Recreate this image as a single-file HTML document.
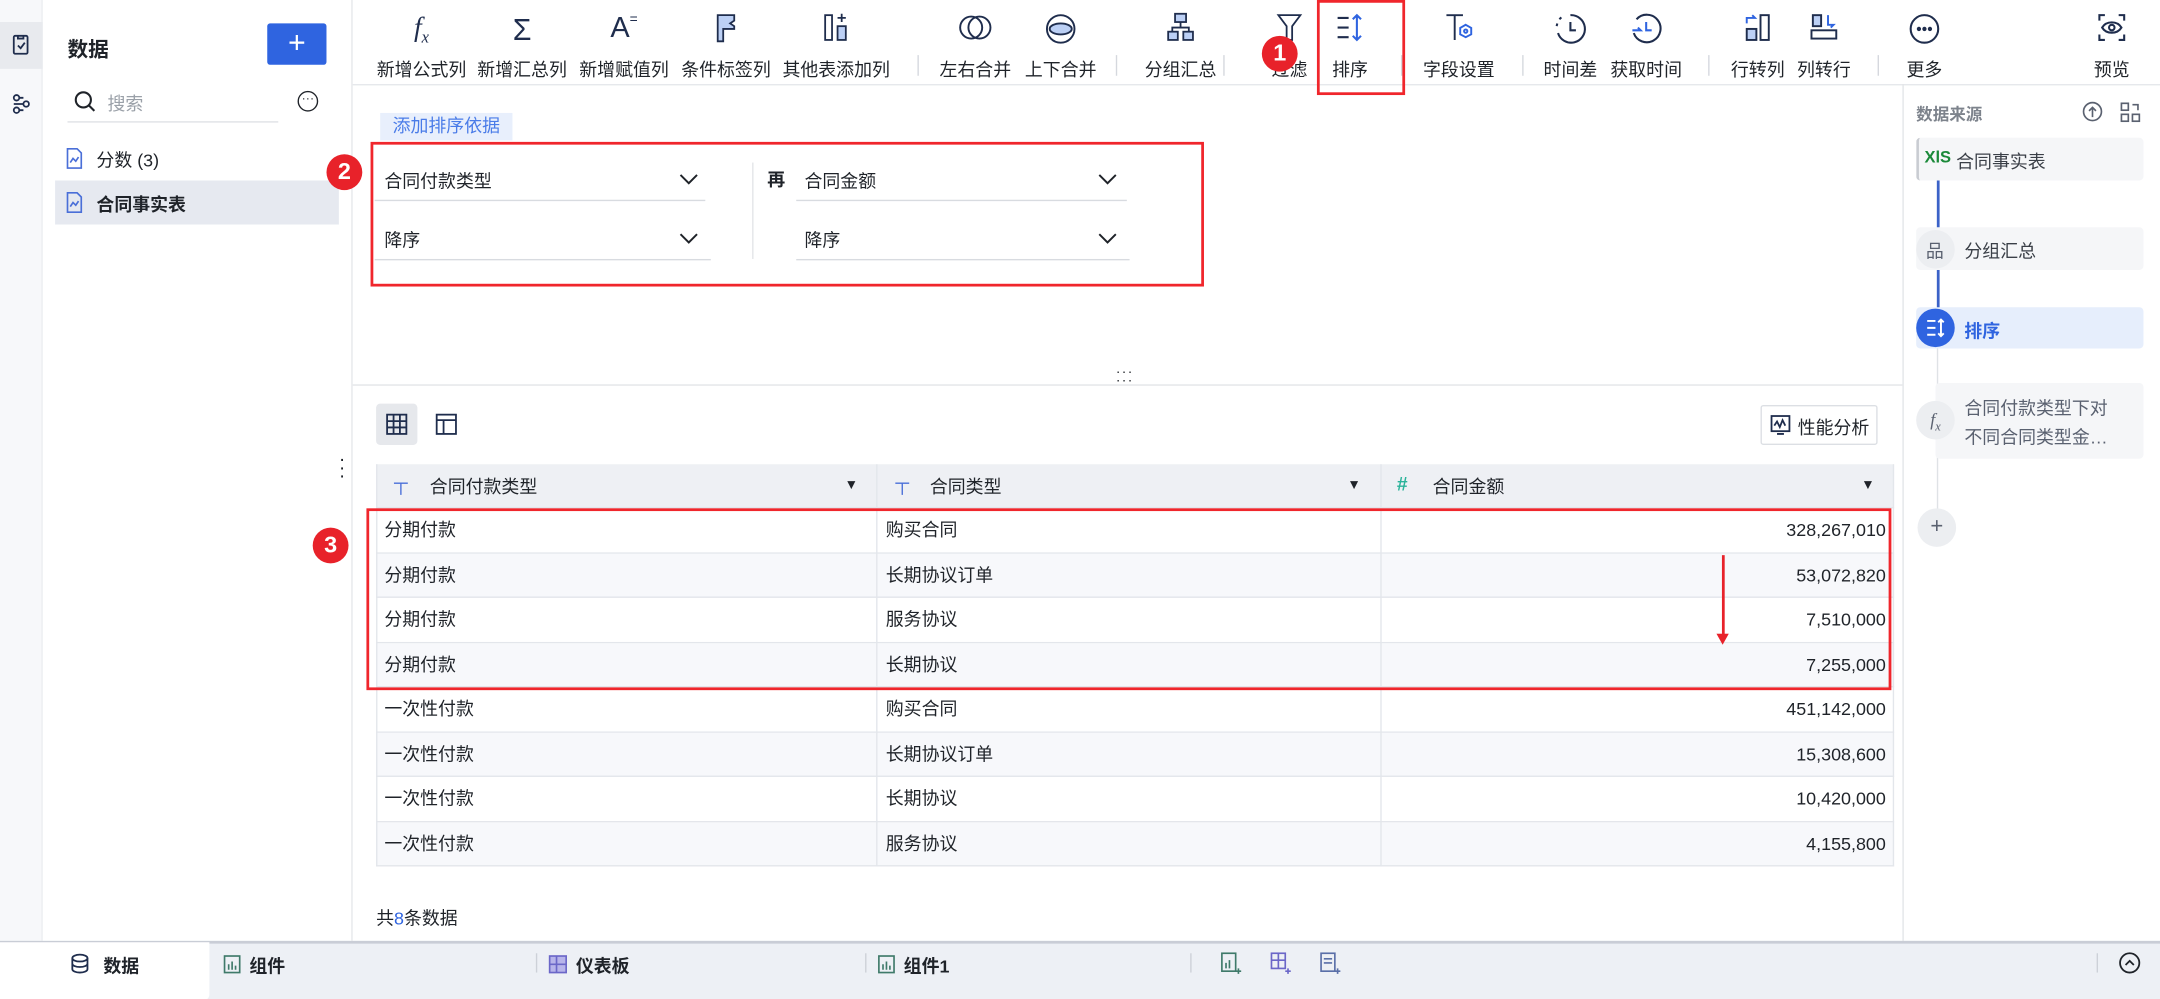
<!DOCTYPE html>
<html><head><meta charset="utf-8"><style>
*{box-sizing:border-box;margin:0;padding:0}
html,body{width:2160px;height:999px;overflow:hidden;background:#fff}
#w{width:1568px;height:725.2px;transform:scale(1.377551);transform-origin:0 0;position:relative;font-family:"Liberation Sans","Noto Sans CJK SC",sans-serif;font-size:13px;color:#1f2329}
.a{position:absolute}
.tb{position:absolute;top:0;height:61px;text-align:center;font-size:13px;color:#1f2329}
.tb svg{display:block;margin:8px auto 0}
.tb span{position:absolute;top:40px;left:50%;transform:translateX(-50%);white-space:nowrap}
.sep{position:absolute;top:40px;width:1px;height:15px;background:#d5d8de}
.red{position:absolute;border:2px solid #f0262c}
.num{position:absolute;width:26px;height:26px;border-radius:50%;background:#e8222a;color:#fff;font-size:17px;font-weight:bold;text-align:center;line-height:26px}
.row{position:absolute;left:273px;width:1102px;height:32.5px;border-bottom:1px solid #e3e6eb}
.row div{position:absolute;top:0;line-height:31px}
.vl{position:absolute;width:1px;background:#e3e6eb}
.card{position:absolute;left:1391px;width:165px;background:#f5f6f8;border-radius:3px}
</style></head><body><div id="w">
<div class="a" style="left:0;top:0;width:31px;height:683px;background:#f7f8fa;border-right:1px solid #eceef1"></div>
<div class="a" style="left:0;top:16px;width:31px;height:34px;background:#e8eaee"></div>
<svg class="a" style="left:7px;top:24px" width="17" height="17" viewBox="0 0 17 17" fill="none" stroke="#1f2d4d" stroke-width="1.3"><rect x="3" y="2" width="10" height="13" rx="1"/><path d="M6 2v2h4V2M6 9l2 2 3-4"/></svg>
<svg class="a" style="left:7px;top:67px" width="17" height="17" viewBox="0 0 17 17" fill="none" stroke="#1f2d4d" stroke-width="1.3"><circle cx="5" cy="4" r="2"/><circle cx="12" cy="8.5" r="2"/><circle cx="5" cy="13" r="2"/><path d="M7 4h3M7 13h3M3 8.5h7"/></svg>
<div class="a" style="left:31px;top:0;width:225px;height:683px;border-right:1px solid #e6e8eb"></div>
<div class="a" style="left:49px;top:25px;font-size:15px;font-weight:bold">数据</div>
<div class="a" style="left:194px;top:17px;width:43px;height:30px;background:#2f64e0;border-radius:2px;color:#fff;font-size:22px;text-align:center;line-height:28px">+</div>
<svg class="a" style="left:53px;top:65px" width="17" height="17" fill="none" stroke="#1f2329" stroke-width="1.5"><circle cx="7.5" cy="7.5" r="5.5"/><path d="M11.5 11.5l4 4"/></svg>
<div class="a" style="left:78px;top:65px;color:#9aa0a8">搜索</div>
<div class="a" style="left:49px;top:88px;width:153px;height:1px;background:#dfe1e5"></div>
<div class="a" style="left:216px;top:66px;width:15px;height:15px;border:1.3px solid #1f2329;border-radius:50%;font-size:9px;line-height:8px;text-align:center">···</div>
<svg class="a" style="left:47px;top:107px" width="14" height="16" fill="none" stroke="#4a6fd8" stroke-width="1.2"><path d="M2 1h7l3 3v11H2z"/><path d="M4 11l2-3 2 2 2-3"/></svg>
<div class="a" style="left:70px;top:106px">分数 (3)</div>
<div class="a" style="left:40px;top:131px;width:206px;height:32px;background:#e6e9f0"></div>
<svg class="a" style="left:47px;top:139px" width="14" height="16" fill="none" stroke="#4a6fd8" stroke-width="1.2"><path d="M2 1h7l3 3v11H2z"/><path d="M4 11l2-3 2 2 2-3"/></svg>
<div class="a" style="left:70px;top:138px;font-weight:bold">合同事实表</div>
<div class="a" style="left:256px;top:61px;width:1312px;height:1px;background:#e6e8eb"></div>
<div class="tb" style="left:276px;width:60px"><div style="font-family:'Liberation Serif',serif;font-style:italic;font-size:20px;color:#1f2d4d;margin-top:9px">f<sub style="font-size:12px">x</sub></div><span>新增公式列</span></div>
<div class="tb" style="left:349px;width:60px"><div style="font-size:22px;color:#1f2d4d;margin-top:9px">Σ</div><span>新增汇总列</span></div>
<div class="tb" style="left:423px;width:60px"><div style="font-size:21px;color:#1f2d4d;margin-top:9px">A<small style="font-size:10px;vertical-align:top">=</small></div><span>新增赋值列</span></div>
<div class="tb" style="left:497px;width:60px"><svg width="20" height="24" fill="#bcd0f5" stroke="#1f2d4d" stroke-width="1.3"><path d="M4 3h12v4l-3 2 3 2v2H8v9H4z"/></svg><span>条件标签列</span></div>
<div class="tb" style="left:572px;width:70px"><svg width="22" height="24" fill="none" stroke="#1f2d4d" stroke-width="1.3"><rect x="3" y="3" width="5" height="18"/><rect x="12" y="11" width="6" height="10" fill="#bcd0f5"/><path d="M15 2v6M12 5h6"/></svg><span>其他表添加列</span></div>
<div class="sep" style="left:666px"></div>
<div class="tb" style="left:678px;width:60px"><svg width="26" height="24" fill="none" stroke="#1f2d4d" stroke-width="1.4"><circle cx="10" cy="12" r="8"/><circle cx="16" cy="12" r="8"/></svg><span>左右合并</span></div>
<div class="tb" style="left:740px;width:60px"><svg width="24" height="26" fill="none" stroke="#1f2d4d" stroke-width="1.4"><circle cx="12" cy="13" r="10"/><ellipse cx="12" cy="13" rx="8" ry="4" fill="#bcd0f5"/></svg><span>上下合并</span></div>
<div class="sep" style="left:810px"></div>
<div class="tb" style="left:827px;width:60px"><svg width="24" height="24" fill="#bcd0f5" stroke="#1f2d4d" stroke-width="1.3"><rect x="8" y="2" width="8" height="6"/><rect x="3" y="15" width="7" height="6"/><rect x="14" y="15" width="7" height="6"/><path d="M12 8v4M6 15v-3h12v3" fill="none"/></svg><span>分组汇总</span></div>
<div class="sep" style="left:888px"></div>
<div class="tb" style="left:916px;width:40px"><svg width="22" height="24" fill="none" stroke="#1f2d4d" stroke-width="1.3"><path d="M3 3h16l-6 8v10h-4V11z"/></svg><span>过滤</span></div>
<div class="tb" style="left:955px;width:50px"><svg width="24" height="24" fill="none" stroke="#1f2d4d" stroke-width="1.5"><path d="M3 5h8M3 12h8M3 19h8"/><path d="M17 3v18M14 6l3-3 3 3M14 18l3 3 3-3" stroke="#2f64e0"/></svg><span>排序</span></div>
<div class="sep" style="left:1017px"></div>
<div class="tb" style="left:1029px;width:60px"><svg width="24" height="24" fill="none" stroke="#1f2d4d" stroke-width="1.4"><path d="M3 3h12M9 3v18"/><path d="M17 10l4 2.3v4.6L17 19l-4-2.1v-4.6z" stroke="#2f64e0"/><circle cx="17" cy="14.6" r="1.2" stroke="#2f64e0"/></svg><span>字段设置</span></div>
<div class="sep" style="left:1105px"></div>
<div class="tb" style="left:1110px;width:60px"><svg width="26" height="26" fill="none" stroke="#1f2d4d" stroke-width="1.5"><path d="M13 3a10 10 0 1 1-9 13"/><path d="M3 11l.5-2M5 6l1.5-1.5" stroke-dasharray="2 2"/><path d="M13 8v6h4"/></svg><span>时间差</span></div>
<div class="tb" style="left:1165px;width:60px"><svg width="26" height="26" fill="none" stroke="#1f2d4d" stroke-width="1.5"><path d="M6 6a10 10 0 1 1-2 10"/><path d="M13 8v6h4M3 14h6l-2-2" stroke="#2f64e0"/></svg><span>获取时间</span></div>
<div class="sep" style="left:1240px"></div>
<div class="tb" style="left:1251px;width:50px"><svg width="24" height="24" fill="none" stroke="#1f2d4d" stroke-width="1.4"><rect x="14" y="3" width="6" height="18"/><rect x="4" y="13" width="7" height="8" fill="#bcd0f5"/><path d="M4 9V5h6l-2-2" stroke="#2f64e0"/></svg><span>行转列</span></div>
<div class="tb" style="left:1299px;width:50px"><svg width="24" height="24" fill="none" stroke="#1f2d4d" stroke-width="1.4"><rect x="3" y="14" width="18" height="6"/><rect x="4" y="3" width="6" height="8" fill="#bcd0f5"/><path d="M15 3v7h4l-2 2" stroke="#2f64e0"/></svg><span>列转行</span></div>
<div class="sep" style="left:1363px"></div>
<div class="tb" style="left:1377px;width:40px"><svg width="26" height="26" fill="none" stroke="#1f2d4d" stroke-width="1.5"><circle cx="13" cy="13" r="10"/><circle cx="9" cy="13" r=".8" fill="#1f2d4d"/><circle cx="13" cy="13" r=".8" fill="#1f2d4d"/><circle cx="17" cy="13" r=".8" fill="#1f2d4d"/></svg><span>更多</span></div>
<div class="tb" style="left:1513px;width:40px"><svg width="24" height="24" fill="none" stroke="#1f2d4d" stroke-width="1.5"><path d="M3 7V3h4M17 3h4v4M21 17v4h-4M7 21H3v-4"/><path d="M5 12c3-5 11-5 14 0-3 5-11 5-14 0z"/><circle cx="12" cy="12" r="2"/></svg><span>预览</span></div>
<div class="red" style="left:956px;top:0;width:64px;height:69px"></div>
<div class="num" style="left:916px;top:26px">1</div>
<div class="a" style="left:276px;top:82px;width:96px;height:20px;background:#e8effc;color:#4a7ce8;text-align:center;line-height:20px">添加排序依据</div>
<div class="red" style="left:269px;top:103px;width:605px;height:105px"></div>
<div class="num" style="left:237px;top:112px">2</div>
<div class="a" style="left:279px;top:121px">合同付款类型</div>
<div class="a" style="left:272px;top:145px;width:240px;height:1px;background:#d8dbe0"></div>
<div class="a" style="left:279px;top:164px">降序</div>
<div class="a" style="left:272px;top:188px;width:244px;height:1px;background:#d8dbe0"></div>
<svg class="a" style="left:493px;top:126px" width="14" height="9" fill="none" stroke="#1f2329" stroke-width="1.4"><path d="M1 1l6 6 6-6"/></svg>
<svg class="a" style="left:493px;top:169px" width="14" height="9" fill="none" stroke="#1f2329" stroke-width="1.4"><path d="M1 1l6 6 6-6"/></svg>
<div class="a" style="left:546px;top:118px;width:1px;height:70px;background:#e3e5e8"></div>
<div class="a" style="left:557px;top:120px;font-weight:bold">再</div>
<div class="a" style="left:584px;top:121px">合同金额</div>
<div class="a" style="left:578px;top:145px;width:240px;height:1px;background:#d8dbe0"></div>
<div class="a" style="left:584px;top:164px">降序</div>
<div class="a" style="left:578px;top:188px;width:242px;height:1px;background:#d8dbe0"></div>
<svg class="a" style="left:797px;top:126px" width="14" height="9" fill="none" stroke="#1f2329" stroke-width="1.4"><path d="M1 1l6 6 6-6"/></svg>
<svg class="a" style="left:797px;top:169px" width="14" height="9" fill="none" stroke="#1f2329" stroke-width="1.4"><path d="M1 1l6 6 6-6"/></svg>
<div class="a" style="left:256px;top:279px;width:1125px;height:1px;background:#e3e5e8"></div>
<div class="a" style="left:810px;top:268px;font-size:10px;line-height:6px;letter-spacing:1px">···<br>···</div>
<div class="a" style="left:273px;top:293px;width:30px;height:30px;background:#e6e8ec;border-radius:3px"></div>
<svg class="a" style="left:280px;top:300px" width="16" height="16" fill="none" stroke="#1f2d4d" stroke-width="1.3"><rect x="1" y="1" width="14" height="14"/><path d="M1 5.7h14M1 10.3h14M5.7 1v14M10.3 1v14"/></svg>
<svg class="a" style="left:316px;top:300px" width="16" height="16" fill="none" stroke="#1f2d4d" stroke-width="1.3"><rect x="1" y="1" width="14" height="14"/><path d="M1 5h14M6 5v10"/></svg>
<div class="a" style="left:1278px;top:294px;width:85px;height:29px;border:1px solid #dcdfe4;border-radius:2px"></div>
<svg class="a" style="left:1285px;top:301px" width="15" height="15" fill="none" stroke="#1f2d4d" stroke-width="1.3"><rect x="1" y="1" width="13" height="11"/><path d="M3 8l2-3 2 4 2-5 2 4M5 14h5"/></svg>
<div class="a" style="left:1305px;top:300px">性能分析</div>
<div class="a" style="left:246px;top:330px;font-size:14px;line-height:6px">·<br>·<br>·</div>
<div class="a" style="left:273px;top:337px;width:1102px;height:32px;background:#eef0f4;border-bottom:1px solid #e3e6eb"></div>
<div class="a" style="left:286px;top:342px;color:#4a6fd8;font-size:14px">┬</div>
<div class="a" style="left:312px;top:343px">合同付款类型</div>
<div class="a" style="left:613px;top:347px;font-size:10px">▼</div>
<div class="a" style="left:650px;top:342px;color:#4a6fd8;font-size:14px">┬</div>
<div class="a" style="left:675px;top:343px">合同类型</div>
<div class="a" style="left:978px;top:347px;font-size:10px">▼</div>
<div class="a" style="left:1014px;top:343px;color:#2bb39a;font-size:14px;font-weight:bold">#</div>
<div class="a" style="left:1040px;top:343px">合同金额</div>
<div class="a" style="left:1351px;top:347px;font-size:10px">▼</div>
<div class="row" style="top:369px"><div style="left:6px">分期付款</div><div style="left:370px">购买合同</div><div style="right:6px">328,267,010</div></div>
<div class="row" style="top:401.5px;background:#f7f8fb"><div style="left:6px">分期付款</div><div style="left:370px">长期协议订单</div><div style="right:6px">53,072,820</div></div>
<div class="row" style="top:434px"><div style="left:6px">分期付款</div><div style="left:370px">服务协议</div><div style="right:6px">7,510,000</div></div>
<div class="row" style="top:466.5px;background:#f7f8fb"><div style="left:6px">分期付款</div><div style="left:370px">长期协议</div><div style="right:6px">7,255,000</div></div>
<div class="row" style="top:499px"><div style="left:6px">一次性付款</div><div style="left:370px">购买合同</div><div style="right:6px">451,142,000</div></div>
<div class="row" style="top:531.5px;background:#f7f8fb"><div style="left:6px">一次性付款</div><div style="left:370px">长期协议订单</div><div style="right:6px">15,308,600</div></div>
<div class="row" style="top:564px"><div style="left:6px">一次性付款</div><div style="left:370px">长期协议</div><div style="right:6px">10,420,000</div></div>
<div class="row" style="top:596.5px;background:#f7f8fb"><div style="left:6px">一次性付款</div><div style="left:370px">服务协议</div><div style="right:6px">4,155,800</div></div>
<div class="vl" style="left:273px;top:337px;height:292px"></div>
<div class="vl" style="left:636px;top:337px;height:292px"></div>
<div class="vl" style="left:1002px;top:337px;height:292px"></div>
<div class="vl" style="left:1374px;top:337px;height:292px"></div>
<div class="red" style="left:266px;top:369px;width:1107px;height:132px"></div>
<div class="num" style="left:227px;top:383px">3</div>
<div class="a" style="left:1250px;top:403px;width:1.5px;height:60px;background:#e8222a"></div>
<svg class="a" style="left:1246px;top:460px" width="10" height="8"><path d="M0 0h9L4.5 8z" fill="#e8222a"/></svg>
<div class="a" style="left:273px;top:656px">共<span style="color:#2f64e0">8</span>条数据</div>
<div class="a" style="left:1381px;top:61px;width:1px;height:622px;background:#e3e5e8"></div>
<div class="a" style="left:1391px;top:74px;font-size:12px;font-weight:bold;color:#7d838c">数据来源</div>
<svg class="a" style="left:1511px;top:73px" width="16" height="16" fill="none" stroke="#5a6170" stroke-width="1.2"><circle cx="8" cy="8" r="6.5"/><path d="M8 12V5M5.5 7.5L8 5l2.5 2.5"/></svg>
<svg class="a" style="left:1538px;top:73px" width="16" height="16" fill="none" stroke="#5a6170" stroke-width="1.2"><rect x="2" y="2" width="5" height="5"/><rect x="2" y="10" width="5" height="5"/><rect x="10" y="10" width="5" height="5"/><path d="M10 3h4v4"/></svg>
<div class="a" style="left:1406px;top:131px;width:1.5px;height:107px;background:#3b62c8"></div>
<div class="a" style="left:1406px;top:238px;width:1px;height:145px;background:#dfe2e6"></div>
<div class="card" style="top:100px;height:31px;border-left:2px solid #c9ccd2"></div>
<div class="a" style="left:1397px;top:107px;color:#1b8a3a;font-weight:bold;font-size:12px">XlS</div>
<div class="a" style="left:1420px;top:107px;color:#3a3f47">合同事实表</div>
<div class="card" style="top:165px;height:31px"></div>
<div class="a" style="left:1391px;top:167px;width:28px;height:28px;border-radius:50%;background:#eceef1"></div>
<div class="a" style="left:1398px;top:172px;font-size:13px;color:#5a6170">品</div>
<div class="a" style="left:1426px;top:172px;color:#3a3f47">分组汇总</div>
<div class="card" style="top:223px;height:30px;background:#e6eefc"></div>
<div class="a" style="left:1391px;top:224px;width:28px;height:28px;border-radius:50%;background:#2f64e0"></div>
<svg class="a" style="left:1397px;top:230px" width="16" height="16" fill="none" stroke="#fff" stroke-width="1.4"><path d="M2 3h6M2 8h6M2 13h6M12 2v12M10 4l2-2 2 2M10 12l2 2 2-2"/></svg>
<div class="a" style="left:1426px;top:230px;color:#2f64e0;font-weight:bold">排序</div>
<div class="card" style="top:278px;height:55px;left:1405px;width:151px"></div>
<div class="a" style="left:1391px;top:291px;width:28px;height:28px;border-radius:50%;background:#eceef1;text-align:center;line-height:28px;font-family:'Liberation Serif',serif;font-style:italic;color:#5a6170">f<sub style="font-size:9px">x</sub></div>
<div class="a" style="left:1426px;top:286px;color:#5a6170;line-height:21px">合同付款类型下对<br>不同合同类型金…</div>
<div class="a" style="left:1392px;top:369px;width:28px;height:28px;border-radius:50%;background:#eceef1;text-align:center;line-height:27px;font-size:16px;color:#5a6170">+</div>
<div class="a" style="left:0;top:683px;width:1568px;height:43px;background:#edf0f5;border-top:2px solid #c9cdd6"></div>
<div class="a" style="left:0;top:684px;width:152px;height:42px;background:#fff;border-radius:0 0 4px 0"></div>
<svg class="a" style="left:51px;top:692px" width="14" height="15" fill="none" stroke="#1f2d4d" stroke-width="1.3"><ellipse cx="7" cy="3.5" rx="5.5" ry="2.5"/><path d="M1.5 3.5v8c0 1.4 2.5 2.5 5.5 2.5s5.5-1.1 5.5-2.5v-8M1.5 7.5c0 1.4 2.5 2.5 5.5 2.5s5.5-1.1 5.5-2.5"/></svg>
<div class="a" style="left:75px;top:691px;font-weight:bold">数据</div>
<svg class="a" style="left:162px;top:693px" width="13" height="14" fill="none" stroke="#3f7a6a" stroke-width="1.2"><rect x="1" y="1" width="11" height="12"/><path d="M4 11V7M6.5 11V5M9 11V8"/></svg>
<div class="a" style="left:181px;top:691px;font-weight:bold">组件</div>
<div class="a" style="left:389px;top:692px;width:1px;height:14px;background:#cdd1d8"></div>
<svg class="a" style="left:398px;top:693px" width="14" height="14" fill="#b7b4ea" stroke="#6b67c8" stroke-width="1.2"><rect x="1" y="1" width="12" height="12"/><path d="M1 7h12M6 1v12" fill="none"/></svg>
<div class="a" style="left:418px;top:691px;font-weight:bold">仪表板</div>
<div class="a" style="left:628px;top:692px;width:1px;height:14px;background:#cdd1d8"></div>
<svg class="a" style="left:637px;top:693px" width="13" height="14" fill="none" stroke="#3f7a6a" stroke-width="1.2"><rect x="1" y="1" width="11" height="12"/><path d="M4 11V7M6.5 11V5M9 11V8"/></svg>
<div class="a" style="left:656px;top:691px;font-weight:bold">组件1</div>
<div class="a" style="left:864px;top:692px;width:1px;height:14px;background:#cdd1d8"></div>
<svg class="a" style="left:886px;top:691px" width="16" height="17" fill="none" stroke="#3f7a6a" stroke-width="1.2"><rect x="1" y="1" width="10" height="13"/><path d="M4 12V8M6.5 12V6M13 12v4M11 14h4"/></svg>
<svg class="a" style="left:922px;top:691px" width="16" height="17" fill="none" stroke="#6b67c8" stroke-width="1.2"><rect x="1" y="1" width="10" height="11"/><path d="M1 6h10M6 1v11M13 12v4M11 14h4"/></svg>
<svg class="a" style="left:958px;top:691px" width="16" height="17" fill="none" stroke="#5a6fa8" stroke-width="1.2"><rect x="1" y="1" width="10" height="13"/><path d="M3 5h6M3 8h6M13 12v4M11 14h4"/></svg>
<div class="a" style="left:1522px;top:692px;width:1px;height:14px;background:#cdd1d8"></div>
<svg class="a" style="left:1538px;top:691px" width="16" height="16" fill="none" stroke="#1f2329" stroke-width="1.3"><circle cx="8" cy="8" r="7"/><path d="M5 9.5L8 6.5l3 3"/></svg>
</div></body></html>
